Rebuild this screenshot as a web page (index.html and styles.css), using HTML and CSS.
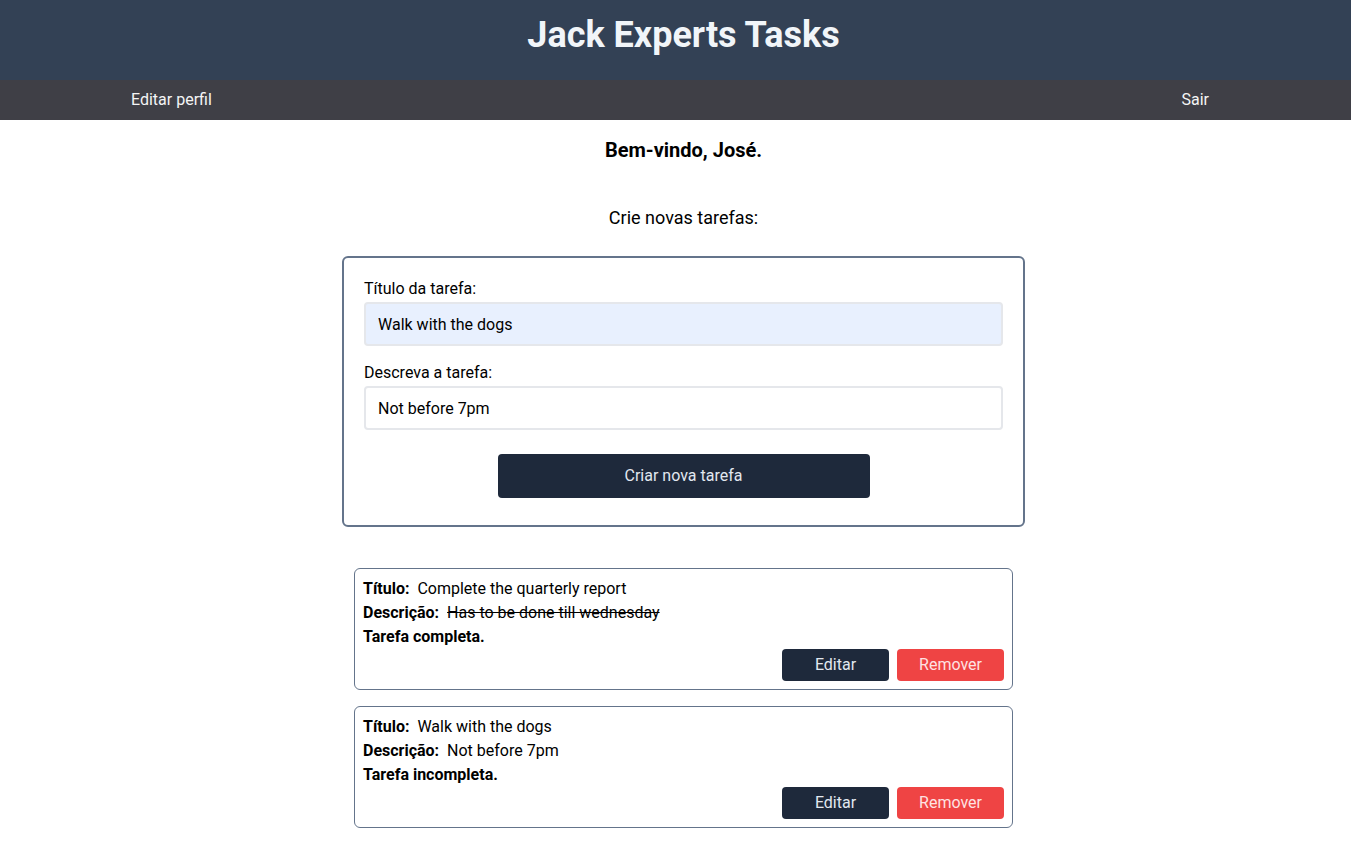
FILE: index.html
```html
<!DOCTYPE html>
<html lang="pt-BR">
<head>
<meta charset="utf-8">
<title>Jack Experts Tasks</title>
<link rel="stylesheet" href="styles.css">
</head>
<body>
<header class="top">
  <h1 class="brand">Jack Experts Tasks</h1>
</header>
<nav class="nav">
  <a class="nav-link" href="#">Editar perfil</a>
  <a class="nav-link" href="#">Sair</a>
</nav>
<main class="main">
  <p class="welcome">Bem-vindo, José.</p>
  <p class="subtitle">Crie novas tarefas:</p>
  <form class="form-card">
    <label class="label" for="t">Título da tarefa:</label>
    <input class="input input-filled" id="t" type="text" value="Walk with the dogs">
    <label class="label label-second" for="d">Descreva a tarefa:</label>
    <input class="input" id="d" type="text" value="Not before 7pm">
    <div class="form-actions">
      <button class="btn-create" type="button">Criar nova tarefa</button>
    </div>
  </form>
  <section class="tasks">
    <article class="task">
      <div class="line"><b>Título:</b>&nbsp; Complete the quarterly report</div>
      <div class="line"><b>Descrição:</b>&nbsp; <s>Has to be done till wednesday</s></div>
      <div class="line"><b>Tarefa completa.</b></div>
      <div class="task-actions">
        <button class="btn btn-dark" type="button">Editar</button>
        <button class="btn btn-red" type="button">Remover</button>
      </div>
    </article>
    <article class="task">
      <div class="line"><b>Título:</b>&nbsp; Walk with the dogs</div>
      <div class="line"><b>Descrição:</b>&nbsp; Not before 7pm</div>
      <div class="line"><b>Tarefa incompleta.</b></div>
      <div class="task-actions">
        <button class="btn btn-dark" type="button">Editar</button>
        <button class="btn btn-red" type="button">Remover</button>
      </div>
    </article>
  </section>
</main>
</body>
</html>
```
FILE: styles.css
```css
* { box-sizing: border-box; }
html, body { margin: 0; padding: 0; }
body {
  font-family: Roboto, "Liberation Sans", sans-serif;
  font-size: 16px;
  color: #000;
  background: #fff;
}
.top {
  height: 80px;
  background: #334155;
  display: flex;
  align-items: center;
  justify-content: center;
  padding-left: 16px;
}
.brand {
  margin: 0 0 10px 0;
  font-size: 36px;
  font-weight: 700;
  color: #f1f5f9;
  line-height: 40px;
}
.nav {
  height: 40px;
  background: #3f3f46;
  display: flex;
  align-items: center;
  justify-content: space-between;
  padding: 0 142px 0 131px;
}
.nav-link {
  color: #f4f4f5;
  text-decoration: none;
  font-size: 16px;
  line-height: 24px;
}
.main {
  display: flex;
  flex-direction: column;
  align-items: center;
  padding: 0 0 40px 16px;
}
.welcome {
  margin: 16px 0 0;
  font-size: 20px;
  line-height: 28px;
  font-weight: 700;
}
.subtitle {
  margin: 40px 0 0;
  font-size: 18px;
  line-height: 28px;
}
.form-card {
  margin-top: 24px;
  width: 683px;
  border: 2px solid #64748b;
  border-radius: 6px;
  padding: 19px 20px 27px;
  display: flex;
  flex-direction: column;
}
.label {
  line-height: 24px;
  margin-bottom: 1px;
}
.label-second { margin-top: 15px; }
.input {
  height: 44px;
  width: 100%;
  border: 2px solid #e5e7eb;
  border-radius: 4px;
  padding: 0 12px;
  font-family: inherit;
  font-size: 16px;
  color: #000;
  background: #fff;
  outline: none;
}
.input-filled { background: #e8f0fe; }
.form-actions {
  display: flex;
  justify-content: center;
  margin-top: 24px;
}
.btn-create {
  width: 372px;
  height: 44px;
  border: 0;
  border-radius: 4px;
  padding: 0 0 2px;
  background: #1e293b;
  color: #e2e8f0;
  font-family: inherit;
  font-size: 16px;
}
.tasks {
  margin-top: 41px;
  display: flex;
  flex-direction: column;
  gap: 16px;
}
.task {
  width: 659px;
  border: 1px solid #64748b;
  border-radius: 6px;
  padding: 8px;
}
.line { line-height: 24px; }
.task-actions {
  display: flex;
  justify-content: flex-end;
  gap: 8px;
}
.btn {
  width: 107px;
  height: 32px;
  border: 0;
  border-radius: 4px;
  padding: 0 0 2px;
  font-family: inherit;
  font-size: 16px;
}
.btn-dark { background: #1e293b; color: #e2e8f0; }
.btn-red { background: #ef4444; color: #fee2e2; }
```
